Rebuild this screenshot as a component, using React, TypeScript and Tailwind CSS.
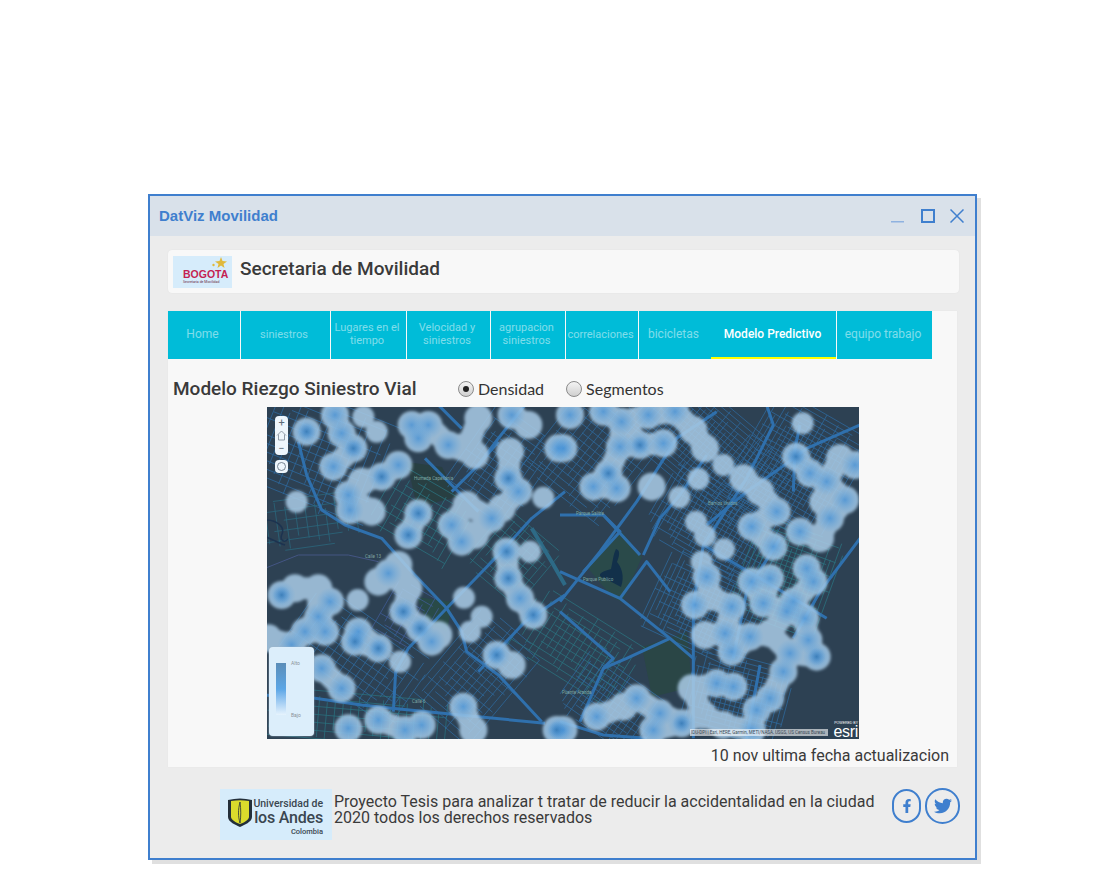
import { FaFacebookF, FaTwitter } from 'react-icons/fa';

// Map data is read from the reference at 3x, so each half has its own offset
const fromLeft = (p: number[]) => [p[0] / 3 - 2, p[1] / 3 - 2, p[2] ?? 1];
const fromRight = (p: number[]) => [p[0] / 3 + 293, p[1] / 3 - 2, p[2] ?? 1];

// x, y, strength (-1 lone pale spot, 0 pale chain, 1 normal, 2 dark centre)
const blobs = [
    ...[
        [125, 80, 2], [210, 30], [295, 35, -1], [335, 80, -1], [230, 85], [265, 130, 2], [205, 185], [350, 215, 2], [400, 180],
        [250, 270], [255, 315], [320, 320, 0], [290, 230, 0], [460, 325, 2], [430, 390, 2], [95, 290, -1], [440, 60], [490, 60],
        [460, 100], [550, 120], [610, 120, 0], [630, 150, 0], [640, 40, 0], [740, 30], [790, 60, 0], [735, 140, 0], [730, 220, 2],
        [760, 260], [680, 340], [710, 310, 0], [835, 278, -1], [880, 130], [605, 300, 0], [560, 360], [590, 410], [630, 390, 0],
        [725, 440, 2], [795, 440, -1], [730, 520, 2], [765, 580], [805, 630, 2], [370, 505], [340, 530, 0], [400, 480, 0], [50, 570, 2],
        [90, 550, 0], [160, 550, 0], [195, 590], [160, 635], [120, 680], [180, 680], [278, 585, -1], [430, 550, 0], [415, 620, 2],
        [465, 670, 2], [500, 710], [520, 690, 0], [270, 710, 2], [340, 730, 2], [280, 680], [405, 770, -1], [597, 578, -1], [650, 635, -1],
        [615, 680, -1], [695, 750, 2], [740, 780, 0], [230, 850], [170, 790], [595, 905], [625, 975, 0], [250, 970], [340, 945],
        [420, 975], [470, 960], [875, 975, 2], [10, 700, 0], [80, 720],
    ].map(fromLeft),
    ...[
        [30, 30], [130, 20], [185, 50], [265, 30], [345, 20], [400, 75, 0], [435, 130, 0], [10, 130], [240, 120, 2], [180, 125],
        [310, 115], [145, 205, 2], [100, 245], [170, 250], [275, 245, 0], [728, 55, -1], [708, 155, 2], [750, 205], [800, 230],
        [840, 160, 0], [885, 180], [490, 180, -1], [415, 222, -1], [358, 277, -1], [550, 220, 0], [600, 260, 0], [650, 320], [408, 350, -1],
        [435, 392, -1], [492, 433, -1], [575, 365], [640, 425], [720, 380], [790, 290, 0], [855, 285], [810, 340], [780, 400, 0],
        [740, 490], [760, 530], [425, 470, -1], [440, 515], [450, 575, 0], [405, 600], [515, 605], [575, 530], [630, 520], [610, 595],
        [700, 590], [680, 620], [735, 640], [435, 690, 0], [495, 685], [570, 695], [630, 685, 0], [515, 740], [745, 705], [770, 755, 2],
        [690, 745], [670, 800], [630, 880], [590, 915], [575, 975], [470, 835], [520, 845], [395, 850, 0], [230, 880], [190, 905, 0],
        [300, 925], [365, 955, 2], [430, 930, 0], [490, 960, 0], [110, 935], [10, 975], [280, 975],
    ].map(fromRight),
];

// Neighbouring spots are bridged so that the heat reads as chains, not beads
const chained = blobs.filter((b) => b[2] >= 0);
const bridges = chained.flatMap((a, i) =>
    chained.slice(i + 1)
        .filter((b) => Math.hypot(a[0] - b[0], a[1] - b[1]) < 30)
        .map((b) => [a[0], a[1], b[0], b[1]]),
);

const leftRoads = [
    '100,110 125,210 170,315 240,360 350,400 440,500 545,610 590,680 605,740 700,810 830,950',
    '385,920 392,800 430,730 545,610 700,450 800,340 900,260',
    '150,880 290,900 380,910 640,935 840,955',
    '560,260 640,180 700,110',
    '480,160 560,240 640,320',
    '780,0 700,100 640,180',
    '640,800 780,650 900,570',
    '520,0 590,70',
    '0,870 150,880',
];
const rightRoads = [
    '0,590 120,440 230,290 350,100 470,20',
    '250,450 300,340 360,270 440,150',
    '440,360 560,260 660,190',
    '400,1000 400,600 430,420 560,220 640,60 620,0',
    '0,500 180,580 330,700 400,760',
    '70,500 180,380 130,330',
    '180,580 260,470 330,560',
    '700,260 705,130 720,60',
    '0,950 130,990 260,1000',
    '600,780 560,1000',
    '60,950 130,790 160,760 0,620',
    '660,190 740,130 900,60',
    '0,330 130,330 240,450',
    '430,420 600,520 800,640',
    '660,400 560,560 520,760',
    '900,400 780,560 700,700',
    '330,700 200,760 130,790',
];
const toLocal = (line: string, offset: number) =>
    line.split(' ').map((pair) => {
        const [x, y] = pair.split(',').map(Number);
        return `${x / 3 + offset},${y / 3 - 2}`;
    }).join(' ');

// cx, cy, w, h, angle, step, colour
const patches: [number, number, number, number, number, number, string][] = [
    [45, 45, 150, 110, 22, 8, '#2e6a9e'],
    [40, 115, 100, 50, -8, 10, '#2a6a80'],
    [155, 110, 90, 70, 30, 8, '#2a7280'],
    [235, 60, 80, 100, 35, 7, '#2e6a9e'],
    [90, 250, 140, 80, 35, 8, '#2e6a9e'],
    [90, 312, 190, 50, 5, 8, '#2a7280'],
    [210, 270, 80, 120, 40, 7, '#2e6a9e'],
    [245, 150, 70, 70, 40, 7, '#2a7280'],
    [325, 50, 100, 110, 38, 7, '#2e6a9e'],
    [440, 40, 170, 90, 40, 5, '#2e6a9e'],
    [450, 120, 130, 80, 30, 5, '#2e6a9e'],
    [530, 60, 110, 120, 30, 5, '#2e6a9e'],
    [440, 200, 110, 90, 25, 5, '#2e6a9e'],
    [310, 240, 120, 70, 32, 7, '#2a7280'],
    [345, 300, 100, 70, 35, 6, '#2e6a9e'],
    [470, 290, 100, 80, 15, 5, '#2e6a9e'],
    [520, 170, 90, 100, 20, 5, '#2a7280'],
    [140, 210, 50, 60, 30, 8, '#3f5c96'],
];

const labels: [number, number, string][] = [
    [147, 73, 'Humeda Capellania'],
    [441, 98, 'Barrios Unidos'],
    [309, 108, 'Parque Salitre'],
    [316, 174, 'Parque Publico'],
    [98, 151, 'Calle 13'],
    [295, 287, 'Puente Aranda'],
    [145, 296, 'Calle 6'],
];

function HeatMap() {
    return (
        <svg viewBox="0 0 592 332" className="block w-full h-full">
            <defs>
                <filter id="soft" x="-5%" y="-5%" width="110%" height="110%">
                    <feGaussianBlur stdDeviation="1.6" />
                </filter>
                <radialGradient id="core">
                    <stop offset="0%" stopColor="#2f86d6" stopOpacity="0.6" />
                    <stop offset="100%" stopColor="#5aa4e2" stopOpacity="0" />
                </radialGradient>
                <radialGradient id="deep">
                    <stop offset="0%" stopColor="#23659f" stopOpacity="0.5" />
                    <stop offset="100%" stopColor="#2f86d6" stopOpacity="0" />
                </radialGradient>
            </defs>
            <rect width="592" height="332" fill="#2d4153" />
            {/* parks */}
            <polygon points="320,160 355,125 375,150 355,195 345,190" fill="#2a4a4a" />
            <polygon points="140,55 175,60 190,90 150,100" fill="#283f42" />
            <polygon points="150,190 185,195 180,225 160,215" fill="#294a48" />
            <polygon points="375,240 420,225 425,280 385,290" fill="#2a4646" />
            {patches.map(([cx, cy, w, h, angle, step, color], i) => {
                const across = Math.floor(w / step);
                const down = Math.floor(h / step);
                return (
                    <g key={i} transform={`rotate(${angle} ${cx} ${cy})`} stroke={color} strokeWidth="0.7">
                        {Array.from({ length: across + 1 }, (_, k) => (
                            <line
                                key={k}
                                x1={cx - w / 2 + k * step}
                                x2={cx - w / 2 + k * step}
                                y1={cy - h / 2 + (((k + i) * 37) % 11) / 11 * h * 0.3}
                                y2={cy + h / 2 - (((k + i) * 23) % 13) / 13 * h * 0.3}
                            />
                        ))}
                        {Array.from({ length: down + 1 }, (_, k) => (
                            <line
                                key={k}
                                x1={cx - w / 2 + (((k + i) * 29) % 11) / 11 * w * 0.3}
                                x2={cx + w / 2 - (((k + i) * 17) % 13) / 13 * w * 0.3}
                                y1={cy - h / 2 + k * step}
                                y2={cy - h / 2 + k * step}
                            />
                        ))}
                    </g>
                );
            })}
            {/* teal highway and Calle 13 */}
            <polyline points={toLocal('800,370 860,470 900,540', -2)} fill="none" stroke="#2d6a86" strokeWidth="4" />
            <polyline points={toLocal('0,490 100,450 250,450 340,470', -2)} fill="none" stroke="#4a5a90" strokeWidth="0.8" />
            {leftRoads.map((r, i) => (
                <polyline key={i} points={toLocal(r, -2)} fill="none" stroke="#2f70ad" strokeWidth="3" strokeLinejoin="round" />
            ))}
            {rightRoads.map((r, i) => (
                <polyline key={i} points={toLocal(r, 293)} fill="none" stroke="#2f70ad" strokeWidth="3" strokeLinejoin="round" />
            ))}
            {/* river and lake */}
            <path d="M-1 113 C10 113 18 120 15 127 C12 134 18 136 21 132 M-1 130 C6 133 12 136 18 138" fill="none" stroke="#1c3350" strokeWidth="1.5" />
            <path d="M349 142 C354 143 352 150 350 155 C354 160 358 168 354 180 C346 176 340 172 334 170 C330 166 338 164 344 162 C346 154 346 148 349 142 Z" fill="#12304a" />
            {labels.map(([x, y, text]) => (
                <text key={text} x={x} y={y} fontSize="4.5" fill="#7fa6a0" fontFamily="Roboto, sans-serif">{text}</text>
            ))}
            {/* pale halo is one union, so overlapping spots leave no rings */}
            <g opacity="0.86" filter="url(#soft)" fill="#a9cbe6" stroke="#a9cbe6">
                {blobs.map(([x, y, s], i) => (
                    <circle key={i} cx={x} cy={y} r={s < 0 ? 11 : 14} strokeWidth="0" />
                ))}
                {bridges.map(([x1, y1, x2, y2], i) => (
                    <line key={i} x1={x1} y1={y1} x2={x2} y2={y2} strokeWidth="22" />
                ))}
            </g>
            {blobs.filter((b) => b[2] > 0).map(([x, y], i) => (
                <circle key={i} cx={x} cy={y} r="14" fill="url(#core)" />
            ))}
            {blobs.filter((b) => b[2] > 1).map(([x, y], i) => (
                <circle key={i} cx={x} cy={y} r="9" fill="url(#deep)" />
            ))}
        </svg>
    );
}

const tabs = [
    { label: 'Home', width: 'w-[72px]', size: 'text-xs', sep: true },
    { label: 'siniestros', width: 'w-[89px]', size: 'text-[11px]', sep: true },
    { label: 'Lugares en el tiempo', width: 'w-[75px]', size: 'text-[11px]', sep: true },
    { label: 'Velocidad y siniestros', width: 'w-[83px]', size: 'text-[11px]', sep: true },
    { label: 'agrupacion siniestros', width: 'w-[74px]', size: 'text-[11px]', sep: true },
    { label: 'correlaciones', width: 'w-[72px]', size: 'text-[11px]', sep: true },
    { label: 'bicicletas', width: 'w-[72px]', size: 'text-xs', sep: false },
];

function Radio({ label, checked }: { label: string; checked?: boolean }) {
    return (
        <div className="flex items-center gap-1 font-['Lato',sans-serif] text-base text-[#333]">
            <span className="flex items-center justify-center w-4 h-4 rounded-full border border-[#8a8a8a] bg-gradient-to-b from-[#f4f4f4] to-[#d0d0d0]">
                {checked && <span className="w-1.5 h-1.5 rounded-full bg-[#222]" />}
            </span>
            {label}
        </div>
    );
}

export default function App() {
    return (
        <div className="pt-[194px] pl-[148px] pb-[31px] bg-white font-['Roboto',sans-serif] text-[#3a3a3a]">
            <div className="w-[829px] h-[666px] border-2 border-[#3f7fce] bg-[#ececec] shadow-[4px_4px_0_#e0e0e0]">
                {/* Title bar */}
                <div className="flex items-center justify-between h-10 pl-[9px] pr-[11px] bg-[#d9e1ea]">
                    <span className="font-['Liberation_Sans',sans-serif] font-bold text-[15px] text-[#3f7fce]">DatViz Movilidad</span>
                    <div className="flex items-center gap-[15px]">
                        <svg className="mr-px" width="14" height="16" viewBox="0 0 14 16"><rect x="0" y="13" width="13" height="1.5" fill="#8fb2e0" /></svg>
                        <svg width="14" height="14" viewBox="0 0 14 14"><rect x="1" y="1" width="12" height="12" fill="none" stroke="#3f7fce" strokeWidth="2" /></svg>
                        <svg width="14" height="14" viewBox="0 0 14 14"><path d="M0.5 0.5 L13.5 13.5 M13.5 0.5 L0.5 13.5" stroke="#3f7fce" strokeWidth="1.5" /></svg>
                    </div>
                </div>

                <div className="pt-[14px] pl-[18px]">
                    {/* Brand card */}
                    <div className="flex items-center gap-2 w-[791px] h-[43px] pl-[5px] rounded bg-[#f8f8f8] shadow-[0_0_1px_#d8d8d8]">
                        <div className="relative w-[59px] h-8 bg-[#d6ecfb]">
                            <svg className="absolute right-[3px] top-0" width="18" height="14" viewBox="0 0 16 14">
                                <polygon points="9,1 10.5,5 15,5.500 11.500,8 12.500,12 9,9.500 5.500,12 6.500,8 3,5.500 7.500,5" fill="#e0b93c" />
                                <circle cx="1.500" cy="9" r="1.200" fill="#e0b93c" />
                            </svg>
                            <span className="absolute left-[10px] top-[12px] font-['Liberation_Sans',sans-serif] font-bold text-[10.5px] leading-[12px] text-[#c41f52]">BOGOTA</span>
                            <span className="absolute left-[10px] top-[24px] text-[3.5px] leading-[4px] text-[#6a2a44]">Secretaria de Movilidad</span>
                        </div>
                        <span className="-mt-1.5 font-medium text-[19px] leading-[24px]">Secretaria de Movilidad</span>
                    </div>

                    {/* Main panel */}
                    <div className="mt-[18px] w-[789px] h-[456px] bg-[#f8f8f8] shadow-[0_0_1px_#e2e2e2]">
                        <div className="flex h-12">
                            {tabs.map((tab) => (
                                <div
                                    key={tab.label}
                                    className={`flex items-center justify-center box-border h-12 pb-[2px] pr-[3px] bg-[#00bcd8] text-center leading-[13px] text-white/50 ${tab.width} ${tab.size} ${tab.sep ? 'mr-px' : ''}`}
                                >
                                    {tab.label}
                                </div>
                            ))}
                            <div className="flex items-center justify-center w-[125px] h-12 mr-px pr-[2px] bg-[#00bcd8] border-b-2 border-[#ffff00] text-xs font-medium text-white">
                                Modelo Predictivo
                            </div>
                            <div className="flex items-center justify-center w-[95px] h-12 pb-[2px] pr-[3px] bg-[#00bcd8] text-xs text-white/50">
                                equipo trabajo
                            </div>
                        </div>

                        <div className="flex items-center h-12 pl-[5px] pt-[13px]">
                            <span className="w-[285px] font-medium text-[19px]">Modelo Riezgo Siniestro Vial</span>
                            <div className="flex items-center gap-[22px] mb-[2px]">
                                <Radio label="Densidad" checked />
                                <Radio label="Segmentos" />
                            </div>
                        </div>

                        <div className="relative ml-[99px] w-[592px] h-[332px]">
                            <HeatMap />
                            {/* Map widgets */}
                            <div className="absolute left-2 top-[9px] w-[13px] flex flex-col items-center bg-[#eef6fc] text-[#5a6a78] text-[11px] leading-[13px] rounded-sm">
                                <span>+</span>
                                <svg width="11" height="13" viewBox="0 0 11 13" fill="none" stroke="#7a8894" strokeWidth="0.8">
                                    <path d="M1 6.500 L5.500 2 L10 6.500 M2.500 5.500 V11 H8.500 V5.500" />
                                </svg>
                                <span>−</span>
                            </div>
                            <div className="absolute left-2 top-[53px] flex items-center justify-center w-[13px] h-[13px] bg-[#eef6fc] rounded-sm">
                                <svg width="11" height="11" viewBox="0 0 11 11" fill="none" stroke="#5a6a78" strokeWidth="0.8"><circle cx="5.500" cy="5.500" r="4" /></svg>
                            </div>
                            <div className="absolute left-[2px] top-[240px] w-[45px] h-[89px] bg-[#dceefb] rounded-sm shadow-[0_0_2px_#9fb4c4]">
                                <div className="absolute left-[7px] top-4 w-[10px] h-[52px] bg-gradient-to-b from-[#5b8db8] via-[#5ba6e6] to-[#e6f3fd]" />
                                <span className="absolute left-[22px] top-[12px] text-[5px] leading-[8px] text-[#8a9299]">Alto</span>
                                <span className="absolute left-[22px] top-[64px] text-[5px] leading-[8px] text-[#8a9299]">Bajo</span>
                            </div>
                            <div className="absolute right-[31px] bottom-[3px] w-[138px] h-[7px] px-px bg-white/60 text-[4.5px] leading-[7px] text-[#3a4a58] whitespace-nowrap overflow-hidden">
                                IDU-DPI | Esri, HERE, Garmin, METI/NASA, USGS, US Census Bureau
                            </div>
                            <div className="absolute right-[1px] bottom-0 flex flex-col items-end text-white font-['Liberation_Sans',sans-serif]">
                                <span className="text-[3.5px] leading-[4px]">POWERED BY</span>
                                <span className="text-[16px] leading-[14px] tracking-[-0.3px]">esri</span>
                            </div>
                        </div>

                        <div className="pt-[7px] pr-2 text-right text-base leading-[20px]">10 nov ultima fecha actualizacion</div>
                    </div>

                    {/* Footer */}
                    <div className="flex mt-[22px] ml-[52px]">
                        <div className="relative shrink-0 w-[112px] h-[51px] bg-[#d6ecfb] text-[#3a4650]">
                            <svg className="absolute left-2 top-[9px]" width="24" height="29" viewBox="0 0 24 29">
                                <path d="M0 2 C8 0 16 0 24 2 V19 C24 24 16 27 12 29 C8 27 0 24 0 19 Z" fill="#232f3a" />
                                <path d="M3 3 C9 2 15 2 21 3 V19 C21 22 15 25 12 26 C9 25 3 22 3 19 Z" fill="#dbdc2c" />
                                <path d="M12 4 C10 12 10 18 12 25 C13 18 13 12 12 4 Z" fill="none" stroke="#232f3a" strokeWidth="0.8" />
                            </svg>
                            <span className="absolute right-[9px] top-[9px] font-medium text-[10.5px] leading-[12px] whitespace-nowrap">Universidad de</span>
                            <span className="absolute right-[9px] top-[20px] font-medium text-[16px] leading-[18px] whitespace-nowrap tracking-[-0.2px]">los Andes</span>
                            <span className="absolute right-[9px] top-[38px] font-medium text-[7.5px] leading-[9px]">Colombia</span>
                        </div>
                        <p className="w-[560px] pl-0.5 pt-[5px] text-base leading-[16px]">
                            Proyecto Tesis para analizar t tratar de reducir la accidentalidad en la ciudad 2020 todos los derechos reservados
                        </p>
                        <div className="flex items-center gap-1 -mt-[1px] h-[36px]">
                            <div className="flex items-center justify-center w-[29px] h-[34px] rounded-full border-2 border-[#3f7fce] text-[#3f7fce] text-sm">
                                <FaFacebookF />
                            </div>
                            <div className="flex items-center justify-center w-[35px] h-[36px] rounded-full border-2 border-[#3f7fce] text-[#3f7fce] text-lg">
                                <FaTwitter />
                            </div>
                        </div>
                    </div>
                </div>
            </div>
        </div>
    );
}
